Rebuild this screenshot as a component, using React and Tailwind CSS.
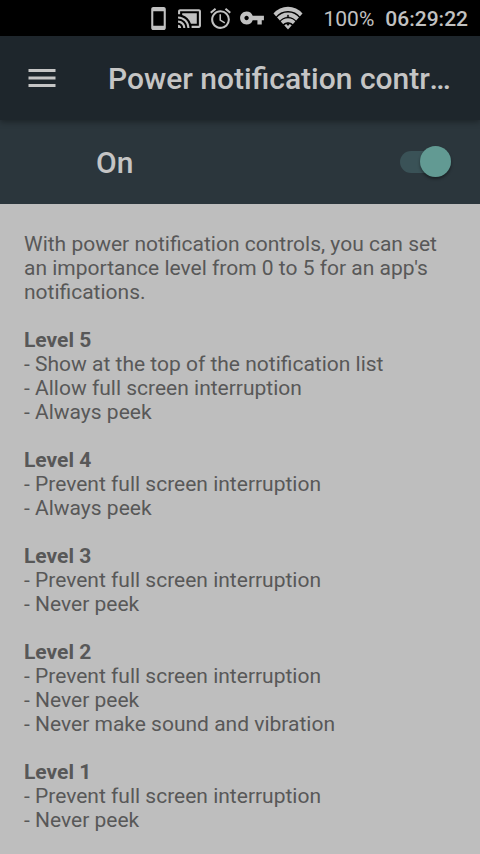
import { useState } from 'react'
import { MdStayCurrentPortrait, MdCastConnected, MdAccessAlarm, MdVpnKey, MdMenu } from 'react-icons/md'

const levels = [
  { name: 'Level 5', rules: ['Show at the top of the notification list', 'Allow full screen interruption', 'Always peek'] },
  { name: 'Level 4', rules: ['Prevent full screen interruption', 'Always peek'] },
  { name: 'Level 3', rules: ['Prevent full screen interruption', 'Never peek'] },
  { name: 'Level 2', rules: ['Prevent full screen interruption', 'Never peek', 'Never make sound and vibration'] },
  { name: 'Level 1', rules: ['Prevent full screen interruption', 'Never peek'] },
]

// signal fan with the small up/down traffic arrows cut out of it
function WifiIcon() {
  return (
    <svg width="30" height="24" viewBox="0 0 30 24" fill="none">
      <path d="M15 23.5L.5 7.5a19 19 0 0 1 29 0z" fill="currentColor" />
      <g stroke="#000" strokeWidth="1.3">
        <path d="M3 11.6a15.2 15.2 0 0 1 24 0" />
        <path d="M6.5 16a10.4 10.4 0 0 1 17 0" />
        <path d="M9.8 19.8a6.2 6.2 0 0 1 10.4 0" />
      </g>
      <path d="M15 8.5l1.5 2h-1v1.5h-1v-1.5h-1zM15 20l-1.5-2h1v-1.5h1V18h1z" fill="#000" />
    </svg>
  )
}

function StatusBar() {
  return (
    <div className="h-9 bg-black text-[#c1c1c1] flex items-center justify-end pr-3">
      <MdStayCurrentPortrait size={25} className="mr-1.5" />
      <MdCastConnected size={25} className="mr-1.5" />
      <MdAccessAlarm size={25} className="mr-1.5" />
      <MdVpnKey size={26} className="mr-2" />
      <WifiIcon />
      <div className="ml-[21px] pt-0.5 flex gap-[11px] text-[21px] leading-6">
        <span>100%</span>
        <span className="font-medium">06:29:22</span>
      </div>
    </div>
  )
}

export default function App() {
  const [on, setOn] = useState(true)

  return (
    <div className="min-h-screen bg-[#bebebe] font-[Roboto,sans-serif]">
      <StatusBar />
      <header className="relative h-21 bg-[#1e262c] text-[#c5c5c5] flex items-center px-6 shadow-[0_2px_6px_rgba(0,0,0,0.35)]">
        <button type="button" aria-label="Menu" className="w-21 shrink-0">
          <MdMenu size={36} />
        </button>
        <h1 className="min-w-0 truncate pt-0.5 text-[30px] leading-9 font-medium">Power notification controls</h1>
      </header>
      <label className="h-21 bg-[#2b363c] text-[#c5c5c5] flex items-center justify-between pl-24 pr-[29px]">
        <span className="pt-0.5 text-[30px] leading-9 font-medium">{on ? 'On' : 'Off'}</span>
        <input
          type="checkbox"
          role="switch"
          checked={on}
          onChange={e => setOn(e.target.checked)}
          className="appearance-none relative h-[22px] w-[51px] rounded-full bg-[#3a5257] before:absolute before:-top-[5px] before:left-0 before:size-[31px] before:rounded-full before:bg-[#bdbdbd] before:shadow-[0_2px_3px_rgba(0,0,0,0.4)] checked:before:left-5 checked:before:bg-[#629a93]"
        />
      </label>
      <main className="px-6 pt-7 text-[21px] leading-6 text-[#585858]">
        <p>With power notification controls, you can set an importance level from 0 to 5 for an app's notifications.</p>
        {levels.map(level => (
          <section key={level.name} className="mt-6">
            <h2 className="font-bold">{level.name}</h2>
            <ul>
              {level.rules.map(rule => <li key={rule}>- {rule}</li>)}
            </ul>
          </section>
        ))}
      </main>
    </div>
  )
}
